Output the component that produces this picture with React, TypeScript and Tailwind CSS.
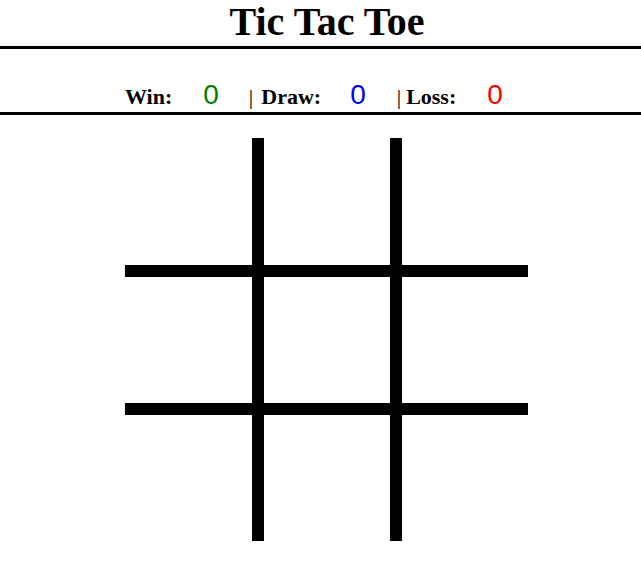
import React from 'react';

const serif = { fontFamily: '"Liberation Serif", "Times New Roman", serif' };

const cells = Array.from({ length: 9 }, (_, i) => i);

const cellClass = (i: number) => {
  const row = Math.floor(i / 3);
  const col = i % 3;
  const parts = ['border-black'];
  if (col < 2) parts.push('border-r-[12px]');
  if (row < 2) parts.push('border-b-[12px]');
  return parts.join(' ');
};

export default function App() {
  return (
    <div className="min-h-screen bg-white text-black" style={serif}>
      {/* Title */}
      <h1 className="pl-[13px] text-center text-[40px] font-bold leading-[44px]">Tic Tac Toe</h1>
      <div className="mt-[2px] border-t-[3px] border-black" />

      {/* Score */}
      <div className="mt-[30px] flex h-[32px] items-baseline pl-[125px] text-[22px] font-bold">
        <span>Win:</span>
        <span className="ml-[31px] text-[28px] font-normal leading-[32px] text-[#008000] font-['Liberation_Sans',Arial,sans-serif]">0</span>
        <span className="ml-[30px] font-normal">|</span>
        <span className="ml-[8px]">Draw:</span>
        <span className="ml-[29px] text-[28px] font-normal leading-[32px] text-[#0000ff] font-['Liberation_Sans',Arial,sans-serif]">0</span>
        <span className="ml-[31px] font-normal">|</span>
        <span className="ml-[5px]">Loss:</span>
        <span className="ml-[31px] text-[28px] font-normal leading-[32px] text-[#ff0000] font-['Liberation_Sans',Arial,sans-serif]">0</span>
      </div>
      <div className="mt-[1px] border-t-[3px] border-black" />

      {/* Board */}
      <div className="mt-[23px] pl-[125px]">
        <div className="grid w-[403px] grid-cols-[139px_138px_126px] grid-rows-[139px_138px_126px]">
          {cells.map((i) => (
            <div key={i} className={cellClass(i)} />
          ))}
        </div>
      </div>
    </div>
  );
}
